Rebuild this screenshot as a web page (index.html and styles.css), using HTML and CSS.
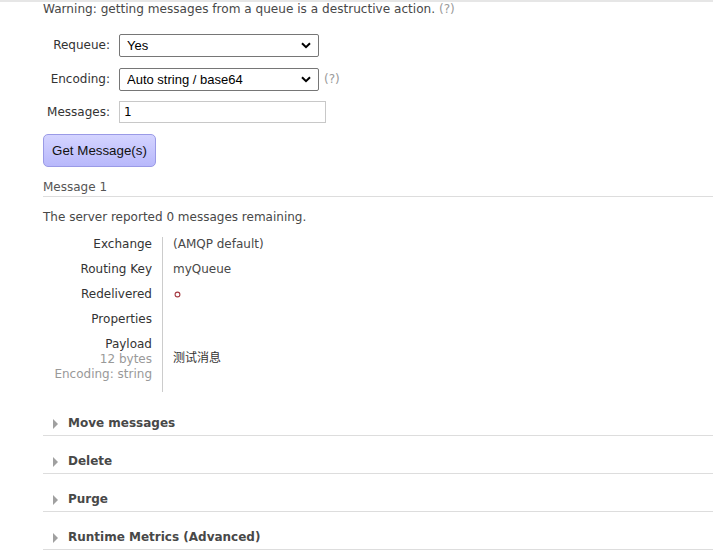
FILE: index.html
```html
<!DOCTYPE html>
<html>
<head>
<meta charset="utf-8">
<link rel="stylesheet" href="styles.css">
</head>
<body>
<div class="topbar"></div>
<div class="page">
  <p class="warning">Warning: getting messages from a queue is a destructive action. <span class="help">(?)</span></p>

  <div class="form">
    <label class="flabel">Requeue:</label>
    <div class="fctl">
      <div class="selwrap">
        <select class="sel"><option>Yes</option></select>
        <svg class="chev" width="10" height="7" viewBox="0 0 10 7"><path d="M1 1.2 L5 5.2 L9 1.2" fill="none" stroke="#000" stroke-width="2"/></svg>
      </div>
    </div>
    <label class="flabel">Encoding:</label>
    <div class="fctl">
      <div class="selwrap">
        <select class="sel"><option>Auto string / base64</option></select>
        <svg class="chev" width="10" height="7" viewBox="0 0 10 7"><path d="M1 1.2 L5 5.2 L9 1.2" fill="none" stroke="#000" stroke-width="2"/></svg>
      </div>
      <span class="help">(?)</span>
    </div>
    <label class="flabel lastrow">Messages:</label>
    <div class="fctl lastrow"><input class="inp" type="text" value="1"></div>
  </div>

  <button class="btn">Get Message(s)</button>

  <h3 class="msghead">Message 1</h3>
  <p class="remaining">The server reported 0 messages remaining.</p>

  <div class="facts">
    <div class="fk">Exchange</div><div class="fv">(AMQP default)</div>
    <div class="fk">Routing Key</div><div class="fv">myQueue</div>
    <div class="fk">Redelivered</div><div class="fv"><svg class="circ" width="7" height="7" viewBox="0 0 7 7"><circle cx="3.5" cy="3.5" r="2.4" fill="none" stroke="#a4373f" stroke-width="1.1"/></svg></div>
    <div class="fk">Properties</div><div class="fv"></div>
    <div class="fk">Payload<br><span class="sub">12 bytes</span><br><span class="sub">Encoding: string</span></div>
    <div class="fv payload">测试消息</div>
  </div>

  <div class="sections">
    <div class="section"><span class="tri"></span>Move messages</div>
    <div class="section"><span class="tri"></span>Delete</div>
    <div class="section"><span class="tri"></span>Purge</div>
    <div class="section"><span class="tri"></span>Runtime Metrics (Advanced)</div>
  </div>
</div>
</body>
</html>
```

FILE: styles.css
```css
html, body {
  margin: 0;
  padding: 0;
  background: #fff;
}
body {
  font-family: "DejaVu Sans", Verdana, sans-serif;
  font-size: 12px;
  line-height: 15px;
  color: #484848;
  overflow: hidden;
}
.topbar {
  height: 2px;
  background: #e6e6e6;
}
.page {
  margin-left: 43px;
}
.warning {
  margin: 0;
  height: 15px;
  font-size: 12.1px;
}
.help {
  color: #9a9a9a;
}
.form {
  display: grid;
  grid-template-columns: 67px auto;
  column-gap: 9px;
  row-gap: 11px;
  margin-top: 17px;
  align-items: center;
}
.lastrow {
  margin-top: -1px;
}
.flabel {
  text-align: right;
  color: #333;
}
.fctl {
  display: flex;
  align-items: center;
  gap: 5px;
}
.selwrap {
  position: relative;
  width: 200px;
  height: 23px;
}
.sel {
  appearance: none;
  -webkit-appearance: none;
  width: 200px;
  height: 23px;
  margin: 0;
  padding: 0 0 0 7px;
  border: 1px solid #767676;
  border-radius: 2px;
  background: #fff;
  font-family: "Liberation Sans", Arial, sans-serif;
  font-size: 13px;
  color: #000;
}
.chev {
  position: absolute;
  right: 8px;
  top: 8px;
  pointer-events: none;
}
.inp {
  width: 207px;
  height: 22px;
  box-sizing: border-box;
  margin: 0;
  padding: 0 4px;
  border: 1px solid #c8c8c8;
  font-family: "DejaVu Sans", Verdana, sans-serif;
  font-size: 12px;
  color: #000;
}
.btn {
  display: block;
  margin-top: 11px;
  width: 113px;
  height: 33px;
  padding: 0;
  border: 1px solid #9a9ae6;
  border-radius: 5px;
  background: linear-gradient(#d4d4ff, #b8b8fb);
  font-family: "Liberation Sans", Arial, sans-serif;
  font-size: 13.33px;
  color: #111;
}
.msghead {
  margin: 13px 0 0;
  font-size: 12px;
  font-weight: normal;
  line-height: 15px;
  color: #555;
  padding-bottom: 1px;
  border-bottom: 1px solid #ddd;
}
.remaining {
  margin: 13px 0 0;
}
.facts {
  display: grid;
  grid-template-columns: 120px auto;
  margin-top: 12px;
  width: 400px;
}
.fk {
  text-align: right;
  padding: 0 10px 10px 0;
  color: #333;
  border-right: 1px solid #ccc;
}
.fv {
  padding: 0 0 10px 10px;
}
.sub {
  color: #999;
}
.circ {
  display: inline-block;
  margin: 4px 0 0 1px;
}
.payload {
  display: flex;
  align-items: center;
  padding-bottom: 12px;
  color: #333;
  font-family: "DejaVu Sans", "Noto Sans CJK SC", sans-serif;
}
.sections {
  margin-top: 6px;
}
.section {
  height: 15px;
  padding: 18px 0 4px 10px;
  border-bottom: 1px solid #ddd;
  font-weight: bold;
  color: #484848;
  display: flex;
  align-items: center;
}
.tri {
  width: 0;
  height: 0;
  border-left: 5px solid #a0a0a0;
  border-top: 5px solid transparent;
  border-bottom: 5px solid transparent;
  margin-right: 10px;
}
```
